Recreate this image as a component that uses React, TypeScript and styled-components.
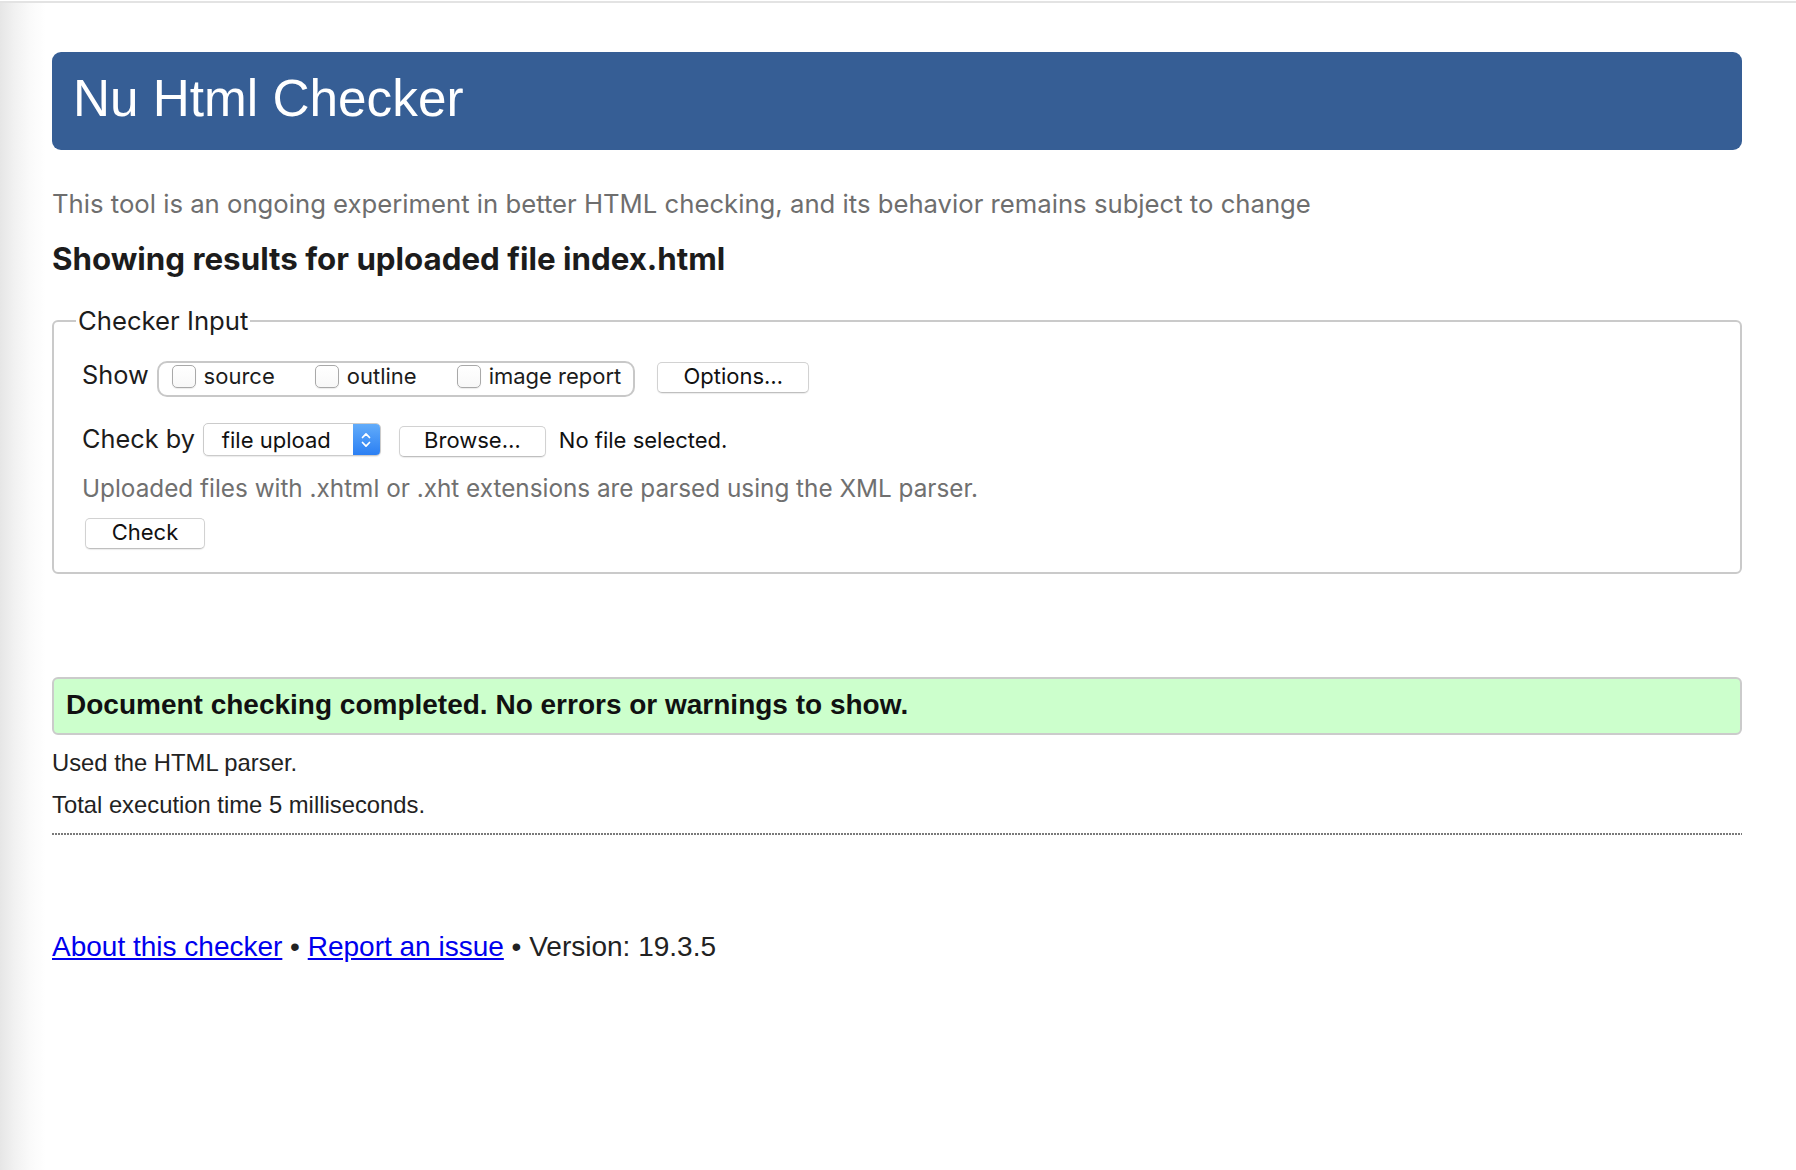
import React from "react";
import styled, { createGlobalStyle } from "styled-components";

const GlobalStyle = createGlobalStyle`
  html {
    height: 100%;
    background:
      linear-gradient(to bottom, #ffffff 0, #ffffff 1px, #e3e3e3 1px, #e3e3e3 3px, transparent 3px) left top / 100% 4px no-repeat,
      linear-gradient(to right, #e6e6e6 0px, #f1f1f1 14px, #fafafa 30px, #ffffff 46px) left top / 100% 100% no-repeat,
      #ffffff;
  }
  body {
    margin: 0;
    font-family: "Liberation Sans", Arial, Helvetica, sans-serif;
    color: #222222;
  }
`;

const ui = `"Inter", "Liberation Sans", Arial, sans-serif`;

const Page = styled.div`
  padding: 52px 54px 0 52px;
`;

const Banner = styled.header`
  height: 98px;
  box-sizing: border-box;
  background: #365e95;
  border-radius: 9px;
  padding: 0 0 4px 21px;
`;

const Title = styled.h1`
  margin: 0;
  font-size: 51.3px;
  font-weight: 400;
  line-height: 94px;
  color: #ffffff;
`;

const Tagline = styled.p`
  margin: 38px 0 0;
  font-family: ${ui};
  font-size: 25.7px;
  line-height: 32px;
  color: #6e6e6e;
`;

const ResultsHeading = styled.h2`
  margin: 21px 0 0;
  font-family: ${ui};
  font-size: 31.3px;
  font-weight: 700;
  line-height: 36px;
  color: #1c1c1c;
`;

const InputFieldset = styled.fieldset`
  margin: 28px 0 0;
  padding: 24px 28px 23px;
  border: 2px solid #cacaca;
  border-radius: 6px;
  min-width: 0;
`;

const Legend = styled.legend`
  margin-left: -6px;
  padding: 0 2px;
  font-family: ${ui};
  font-size: 25.7px;
  line-height: 32px;
  color: #1c1c1c;
`;

const ControlRow = styled.div<{ $mt?: number }>`
  display: flex;
  align-items: baseline;
  margin-top: ${(p) => p.$mt ?? 0}px;
`;

const FieldLabel = styled.span`
  font-family: ${ui};
  font-size: 25.3px;
  line-height: 28px;
  color: #1c1c1c;
  margin-right: 8px;
`;

const CheckGroup = styled.div`
  display: inline-flex;
  align-items: baseline;
  height: 36px;
  box-sizing: border-box;
  border: 2px solid #c8c8c8;
  border-radius: 10px;
  padding: 0 12px 0 13px;
`;

const CheckLabel = styled.label`
  display: inline-flex;
  align-items: baseline;
  margin-right: 40px;
  font-family: ${ui};
  font-size: 22px;
  line-height: 26px;
  color: #1c1c1c;
  &:last-child {
    margin-right: 0;
  }
`;

const CheckBox = styled.input`
  appearance: none;
  -webkit-appearance: none;
  align-self: center;
  flex: none;
  width: 24px;
  height: 23px;
  margin: 0 8px 0 0;
  box-sizing: border-box;
  border: 1px solid #a9a9a9;
  border-radius: 5px;
  background: linear-gradient(#ffffff, #f8f8f8);
  box-shadow: 0 1px 1px rgba(0, 0, 0, 0.08);
`;

const PlainButton = styled.button<{ $w: number }>`
  width: ${(p) => p.$w}px;
  height: 31px;
  box-sizing: border-box;
  padding: 1px 0 3px;
  margin: 0;
  border: 1px solid #d2d2d2;
  border-bottom-color: #bfbfbf;
  border-radius: 5px;
  background: #ffffff;
  box-shadow: 0 1px 1px rgba(0, 0, 0, 0.08);
  font-family: ${ui};
  font-size: 22px;
  line-height: 25px;
  color: #111111;
  text-align: center;
`;

const OptionsButton = styled(PlainButton)`
  margin-left: 22px;
`;

const BrowseButton = styled(PlainButton)`
  margin-left: 18px;
`;

const SubmitButton = styled(PlainButton)`
  margin-left: 3px;
`;

const Select = styled.div`
  display: inline-flex;
  width: 178px;
  box-sizing: border-box;
  border: 1px solid #cbcbcb;
  border-radius: 5px;
  background: #ffffff;
  box-shadow: 0 1px 1px rgba(0, 0, 0, 0.08);
  overflow: hidden;
`;

const SelectValue = styled.span`
  flex: 1;
  padding: 3px 0 2px 18px;
  font-family: ${ui};
  font-size: 22px;
  line-height: 26px;
  color: #111111;
`;

const Stepper = styled.span`
  width: 27px;
  flex: none;
  display: flex;
  align-items: center;
  justify-content: center;
  background: linear-gradient(#62acfa, #2b7ff3);
`;

const NoFile = styled.span`
  margin-left: 13px;
  font-family: ${ui};
  font-size: 22px;
  line-height: 26px;
  color: #111111;
`;

const Hint = styled.p`
  margin: 16px 0 0;
  font-family: ${ui};
  font-size: 24.3px;
  line-height: 30px;
  color: #707070;
`;

const ButtonRow = styled.div`
  display: flex;
  margin-top: 15px;
`;

const SuccessBar = styled.div`
  margin-top: 103px;
  padding: 0 0 2px 12px;
  border: 2px solid #cbcbcb;
  border-radius: 6px;
  background: #ccffcc;
  font-size: 28px;
  font-weight: 700;
  line-height: 52px;
  color: #111111;
`;

const Note = styled.p<{ $mt: number }>`
  margin: ${(p) => p.$mt}px 0 0;
  font-size: 23.8px;
  line-height: 28px;
  color: #222222;
`;

const Separator = styled.hr`
  margin: 14px 0 0;
  height: 2px;
  border: 0;
  background: repeating-linear-gradient(to right, #7a7a7a 0, #7a7a7a 2px, transparent 2px, transparent 3px);
`;

const Footer = styled.p`
  margin: 96px 0 0;
  font-size: 28px;
  line-height: 32px;
  color: #222222;
`;

const FooterLink = styled.a`
  color: #0000ee;
  text-decoration: underline;
`;

const Chevrons = () => (
  <svg width="12" height="22" viewBox="0 0 12 22" fill="none" aria-hidden="true">
    <path d="M2.5 8.5 L6 4.8 L9.5 8.5" stroke="#ffffff" strokeWidth="1.7" strokeLinecap="round" strokeLinejoin="round" />
    <path d="M2.5 13.5 L6 17.2 L9.5 13.5" stroke="#ffffff" strokeWidth="1.7" strokeLinecap="round" strokeLinejoin="round" />
  </svg>
);

const showOptions = ["source", "outline", "image report"];

export default function App() {
  return (
    <>
      <GlobalStyle />
      <Page>
        <Banner>
          <Title>Nu Html Checker</Title>
        </Banner>
        <Tagline>
          This tool is an ongoing experiment in better HTML checking, and its behavior remains subject to change
        </Tagline>
        <ResultsHeading>Showing results for uploaded file index.html</ResultsHeading>

        <InputFieldset>
          <Legend>Checker Input</Legend>
          <ControlRow>
            <FieldLabel>Show</FieldLabel>
            <CheckGroup>
              {showOptions.map((o) => (
                <CheckLabel key={o}>
                  <CheckBox type="checkbox" />
                  <span>{o}</span>
                </CheckLabel>
              ))}
            </CheckGroup>
            <OptionsButton type="button" $w={152}>
              Options…
            </OptionsButton>
          </ControlRow>
          <ControlRow $mt={26}>
            <FieldLabel>Check by</FieldLabel>
            <Select>
              <SelectValue>file upload</SelectValue>
              <Stepper>
                <Chevrons />
              </Stepper>
            </Select>
            <BrowseButton type="button" $w={147}>
              Browse…
            </BrowseButton>
            <NoFile>No file selected.</NoFile>
          </ControlRow>
          <Hint>Uploaded files with .xhtml or .xht extensions are parsed using the XML parser.</Hint>
          <ButtonRow>
            <SubmitButton type="button" $w={120}>
              Check
            </SubmitButton>
          </ButtonRow>
        </InputFieldset>

        <SuccessBar>Document checking completed. No errors or warnings to show.</SuccessBar>
        <Note $mt={14}>Used the HTML parser.</Note>
        <Note $mt={14}>Total execution time 5 milliseconds.</Note>
        <Separator />
        <Footer>
          <FooterLink href="#about">About this checker</FooterLink> •{" "}
          <FooterLink href="#report">Report an issue</FooterLink> • Version: 19.3.5
        </Footer>
      </Page>
    </>
  );
}
